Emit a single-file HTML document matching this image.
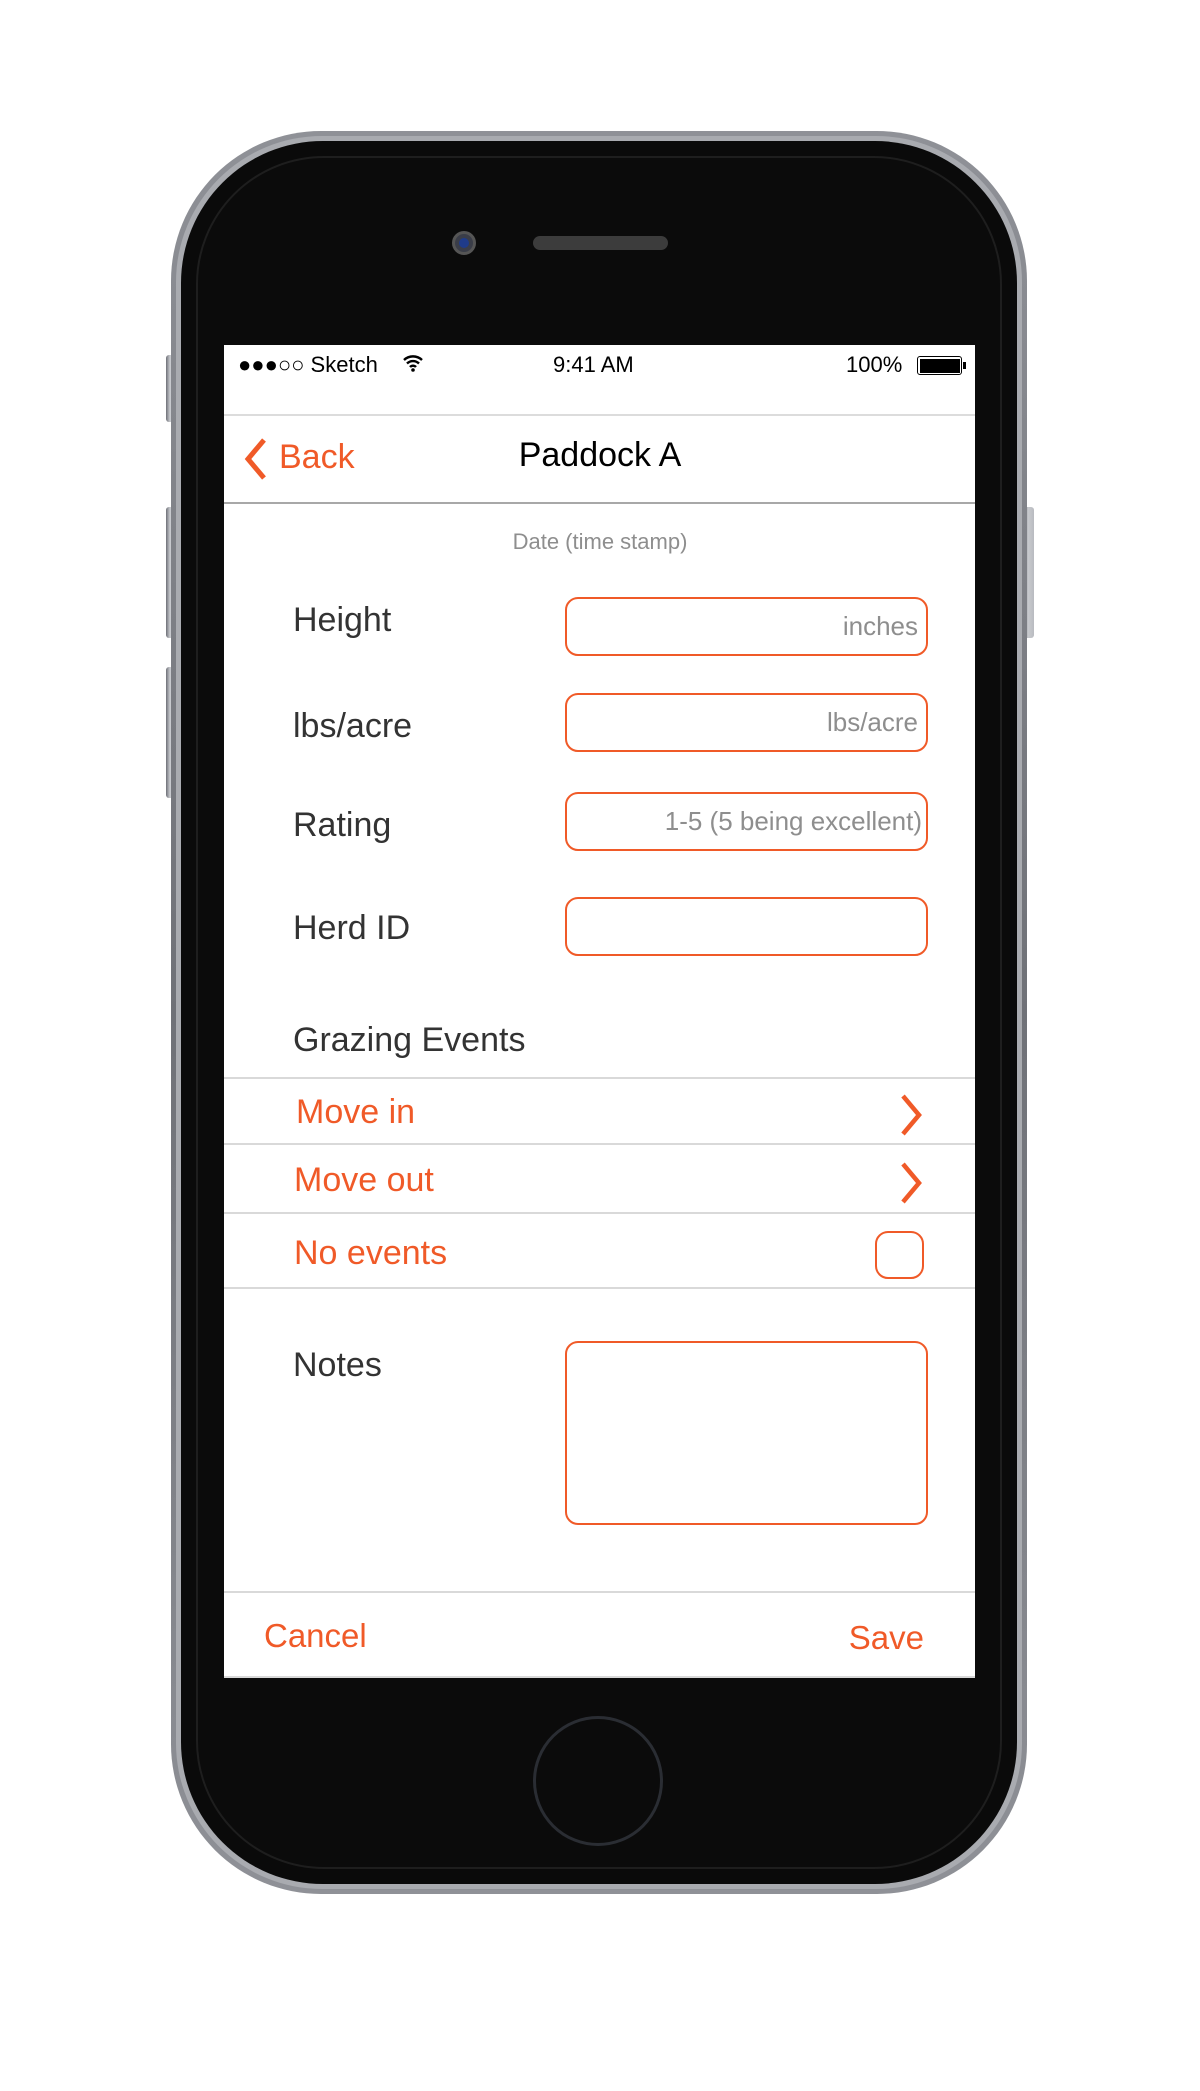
<!DOCTYPE html>
<html><head><meta charset="utf-8"><style>
*{margin:0;padding:0;box-sizing:border-box}
body{width:1200px;height:2091px;background:#fff;position:relative;overflow:hidden;font-family:"Liberation Sans",sans-serif}
.a{position:absolute}
.t{position:absolute;white-space:nowrap}
.org{color:#f05a28}
.lbl{color:#333;font-size:34px;left:293px;line-height:40px}
.inp{position:absolute;left:565px;width:363px;height:59px;border:2px solid #f05a28;border-radius:13px;color:#8e8e8e;font-size:26px;text-align:right;padding-right:8px;line-height:55px}
.line{position:absolute;left:224px;width:751px;height:2px;background:#d9d9d9}
.btn{position:absolute;background:linear-gradient(90deg,#6e7077,#c8cace 40%,#b9bbc0);border-radius:3px}
</style></head><body>
<div class="btn" style="left:166px;top:355px;width:10px;height:67px"></div>
<div class="btn" style="left:166px;top:507px;width:10px;height:131px"></div>
<div class="btn" style="left:166px;top:667px;width:10px;height:131px"></div>
<div class="btn" style="left:1024px;top:507px;width:10px;height:131px"></div>
<div class="a" style="left:171px;top:131px;width:856px;height:1763px;border-radius:150px;background:linear-gradient(180deg,#8f9197,#6f7177 50%,#8f9197);"></div>
<div class="a" style="left:176px;top:136px;width:846px;height:1753px;border-radius:146px;background:#a9abb0"></div>
<div class="a" style="left:181px;top:141px;width:836px;height:1743px;border-radius:142px;background:#0a0a0a"></div>
<div class="a" style="left:196px;top:156px;width:806px;height:1713px;border-radius:128px;background:#0b0b0b;border:2px solid #1e1e1e"></div>
<div class="a" style="left:452px;top:231px;width:24px;height:24px;border-radius:50%;background:#3a3d48;border:3px solid #555"></div>
<div class="a" style="left:459px;top:238px;width:10px;height:10px;border-radius:50%;background:#1f3b8a"></div>
<div class="a" style="left:533px;top:236px;width:135px;height:14px;border-radius:7px;background:#3c3c3c"></div>
<div class="a" style="left:533px;top:1716px;width:130px;height:130px;border-radius:50%;border:3px solid #2a2d33"></div>
<div class="a" style="left:224px;top:345px;width:751px;height:1332px;background:#fff"></div>
<div class="t" style="left:238px;top:350px;font-size:22px;line-height:30px;color:#000">●●●○○ Sketch</div>
<svg class="a" style="left:402px;top:354px" width="22" height="18" viewBox="0 0 22 18"><path d="M2 6 A13 13 0 0 1 20 6 M5 9.5 A8.5 8.5 0 0 1 17 9.5 M8 13 A4 4 0 0 1 14 13" stroke="#000" stroke-width="2.4" fill="none"/><circle cx="11" cy="16" r="1.8"/></svg>
<div class="t" style="left:553px;top:350px;font-size:22px;line-height:30px;color:#000">9:41 AM</div>
<div class="t" style="left:846px;top:350px;font-size:22px;line-height:30px;color:#000">100%</div>
<div class="a" style="left:917px;top:356px;width:45px;height:19px;border:1.5px solid #000;border-radius:3px;padding:1.5px"><div style="width:100%;height:100%;background:#000"></div></div>
<div class="a" style="left:963px;top:362px;width:3px;height:7px;background:#000"></div>
<div class="a" style="left:224px;top:414px;width:751px;height:2px;background:#dcdcdc"></div>
<div class="a" style="left:224px;top:502px;width:751px;height:2px;background:#a8a8a8"></div>
<svg class="a" style="left:240px;top:437px" width="30" height="44" viewBox="0 0 30 44"><path d="M24 3 L8 22 L24 41" stroke="#f05a28" stroke-width="5" fill="none"/></svg>
<div class="t org" style="left:279px;top:437px;font-size:34px;line-height:40px">Back</div>
<div class="t" style="left:400px;width:400px;text-align:center;top:435px;font-size:34px;line-height:40px;color:#000">Paddock A</div>
<div class="t" style="left:400px;width:400px;text-align:center;top:528px;font-size:22px;line-height:28px;color:#8e8e8e">Date (time stamp)</div>
<div class="t lbl" style="top:600px">Height</div>
<div class="inp" style="top:597px">inches</div>
<div class="t lbl" style="top:706px">lbs/acre</div>
<div class="inp" style="top:693px">lbs/acre</div>
<div class="t lbl" style="top:805px">Rating</div>
<div class="inp" style="top:792px;padding-right:4px">1-5 (5 being excellent)</div>
<div class="t lbl" style="top:908px">Herd ID</div>
<div class="inp" style="top:897px"></div>
<div class="t lbl" style="top:1020px">Grazing Events</div>
<div class="line" style="top:1077px"></div>
<div class="line" style="top:1143px"></div>
<div class="line" style="top:1212px"></div>
<div class="line" style="top:1287px"></div>
<div class="t org" style="left:296px;top:1092px;font-size:34px;line-height:40px">Move in</div>
<div class="t org" style="left:294px;top:1160px;font-size:34px;line-height:40px">Move out</div>
<div class="t org" style="left:294px;top:1233px;font-size:34px;line-height:40px">No events</div>
<svg class="a" style="left:898px;top:1093px" width="28" height="44" viewBox="0 0 28 44"><path d="M5 3 L21 22 L5 41" stroke="#f05a28" stroke-width="4.5" fill="none"/></svg>
<svg class="a" style="left:898px;top:1161px" width="28" height="44" viewBox="0 0 28 44"><path d="M5 3 L21 22 L5 41" stroke="#f05a28" stroke-width="4.5" fill="none"/></svg>
<div class="a" style="left:875px;top:1231px;width:49px;height:48px;border:2px solid #f05a28;border-radius:13px"></div>
<div class="t lbl" style="top:1345px">Notes</div>
<div class="a" style="left:565px;top:1341px;width:363px;height:184px;border:2px solid #f05a28;border-radius:13px"></div>
<div class="line" style="top:1591px"></div>
<div class="t org" style="left:264px;top:1616px;font-size:33px;line-height:40px">Cancel</div>
<div class="t org" style="left:824px;width:100px;text-align:right;top:1618px;font-size:33px;line-height:40px">Save</div>
<div class="a" style="left:224px;top:1676px;width:751px;height:2px;background:#d9d9d9"></div>
</body></html>
